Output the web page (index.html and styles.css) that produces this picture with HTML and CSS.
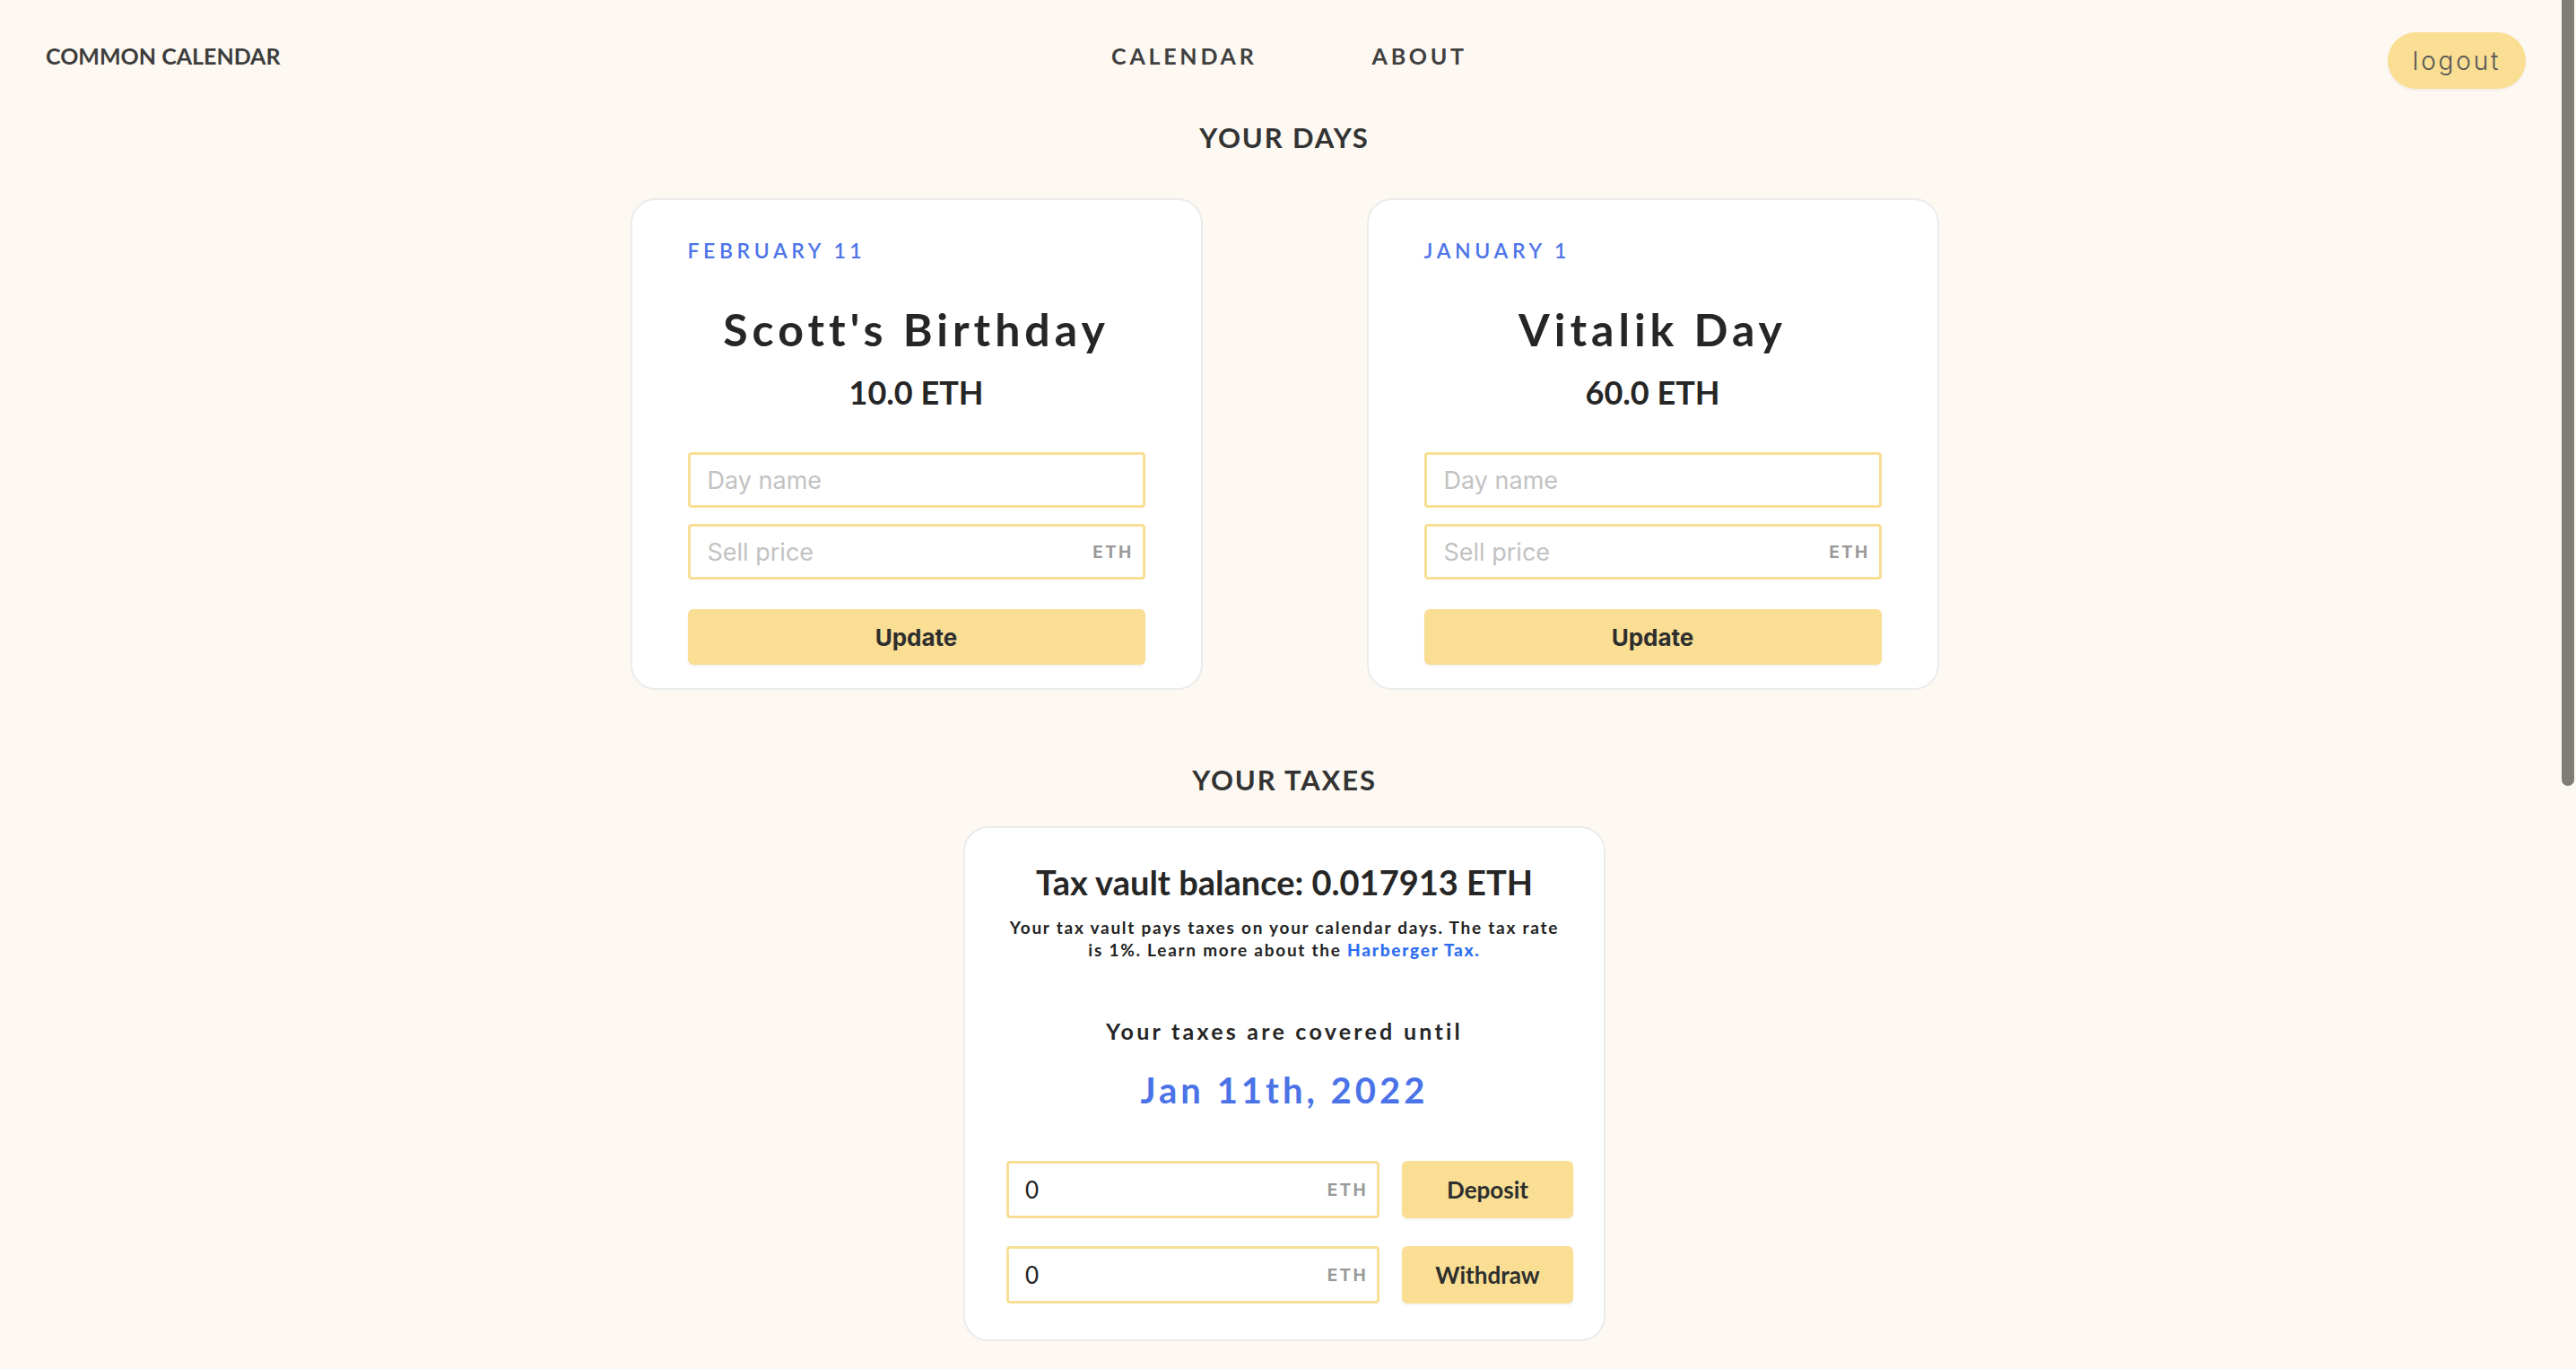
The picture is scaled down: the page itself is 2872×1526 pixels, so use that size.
FILE: index.html
```html
<!DOCTYPE html>
<html lang="en">
<head>
<meta charset="utf-8">
<title>Common Calendar</title>
<link rel="stylesheet" href="styles.css">
</head>
<body>
<header class="topbar">
  <div class="brand">COMMON CALENDAR</div>
  <nav class="nav">
    <a class="nav-link" href="#">CALENDAR</a>
    <a class="nav-link" href="#">ABOUT</a>
  </nav>
  <button class="logout">logout</button>
</header>
<main class="main">
  <h2 class="section-title">YOUR DAYS</h2>
  <div class="days">
    <div class="card day-card">
      <div class="day-date">FEBRUARY 11</div>
      <div class="day-name">Scott's Birthday</div>
      <div class="day-price">10.0 ETH</div>
      <div class="field first-field"><input class="input" placeholder="Day name"></div>
      <div class="field"><input class="input" placeholder="Sell price"><span class="suffix">ETH</span></div>
      <button class="update">Update</button>
    </div>
    <div class="card day-card">
      <div class="day-date">JANUARY 1</div>
      <div class="day-name">Vitalik Day</div>
      <div class="day-price">60.0 ETH</div>
      <div class="field first-field"><input class="input" placeholder="Day name"></div>
      <div class="field"><input class="input" placeholder="Sell price"><span class="suffix">ETH</span></div>
      <button class="update">Update</button>
    </div>
  </div>
  <h2 class="section-title taxes-title">YOUR TAXES</h2>
  <div class="card tax-card">
    <div class="balance">Tax vault balance: 0.017913 ETH</div>
    <p class="tax-desc">Your tax vault pays taxes on your calendar days. The tax rate is 1%. Learn more about the <a class="tax-link" href="#">Harberger Tax.</a></p>
    <div class="covered">Your taxes are covered until</div>
    <div class="covered-date">Jan 11th, 2022</div>
    <div class="vault-row first-row">
      <div class="field vault-field"><input class="input value-input" value="0"><span class="suffix">ETH</span></div>
      <button class="vault-btn">Deposit</button>
    </div>
    <div class="vault-row">
      <div class="field vault-field"><input class="input value-input" value="0"><span class="suffix">ETH</span></div>
      <button class="vault-btn">Withdraw</button>
    </div>
  </div>
</main>
<div class="scroll-thumb"></div>
</body>
</html>
```
FILE: styles.css
```css
html, body {
  margin: 0;
  padding: 0;
}
body {
  background: #fdf9f2;
  height: 1526px;
  overflow: hidden;
  font-family: "Lato", "Open Sans", sans-serif;
  color: #2a2a2a;
}
.topbar {
  height: 124px;
  display: flex;
  align-items: center;
  justify-content: space-between;
  padding: 0 56px 0 51px;
}
.brand {
  font-size: 25px;
  font-weight: 700;
  color: #3d3d3d;
  width: 400px;
}
.nav {
  display: flex;
  gap: 128px;
  margin-left: 8px;
}
.nav-link {
  font-size: 25px;
  font-weight: 700;
  letter-spacing: 0.15em;
  color: #404040;
  text-decoration: none;
}
.logout {
  width: 154px;
  height: 63px;
  margin: 11px 0 0 246px;
  border: none;
  border-radius: 32px;
  background: #f9de93;
  box-shadow: 0 2px 3px rgba(0,0,0,0.05);
  font-family: "Inter", "Roboto", sans-serif;
  font-weight: 300;
  font-size: 28px;
  letter-spacing: 0.1em;
  color: #555;
  padding: 0;
}
.main {
  display: flex;
  flex-direction: column;
  align-items: center;
  padding-right: 8px;
}
.section-title {
  margin: 9px 0 0;
  font-size: 31px;
  line-height: 40px;
  font-weight: 700;
  letter-spacing: 0.06em;
  color: #333;
}
.taxes-title {
  margin-top: 80px;
}
.days {
  display: flex;
  gap: 183px;
  margin-top: 48px;
}
.card {
  background: #fff;
  border: 2px solid #ebebeb;
  border-radius: 28px;
  box-sizing: border-box;
}
.day-card {
  width: 638px;
  height: 548px;
  padding: 41px 62px 24px;
  display: flex;
  flex-direction: column;
}
.day-date {
  font-size: 23px;
  line-height: 30px;
  font-weight: 600;
  letter-spacing: 0.2em;
  color: #4d74e8;
}
.day-name {
  margin-top: 41px;
  text-align: center;
  font-size: 50px;
  line-height: 64px;
  font-weight: 700;
  letter-spacing: 0.1em;
  color: #262626;
}
.day-price {
  margin-top: 14px;
  text-align: center;
  font-size: 36px;
  line-height: 48px;
  font-weight: 700;
  color: #262626;
}
.field {
  display: flex;
  align-items: center;
  height: 62px;
  border: 3px solid #f8df95;
  border-radius: 4px;
  box-sizing: border-box;
  background: #fff;
}
.day-card .field {
  margin-top: 18px;
}
.day-card .first-field {
  margin-top: 43px;
}
.input {
  flex: 1;
  min-width: 0;
  height: 100%;
  border: none;
  outline: none;
  background: transparent;
  padding: 0 0 0 19px;
  font-family: "Inter", "Roboto", sans-serif;
  font-size: 27px;
  color: #222;
}
.input::placeholder {
  color: #c2c2c2;
}
.suffix {
  flex: none;
  padding: 0 10px 0 8px;
  font-family: "Inter", "Roboto", sans-serif;
  font-size: 19px;
  font-weight: 700;
  letter-spacing: 0.12em;
  color: #999;
}
.update {
  margin-top: 33px;
  height: 62px;
  border: none;
  border-radius: 6px;
  background: #f9de93;
  box-shadow: 0 2px 3px rgba(0,0,0,0.05);
  font-family: "Inter", "Roboto", sans-serif;
  font-size: 26px;
  font-weight: 700;
  color: #2e2e2e;
}
.tax-card {
  margin-top: 32px;
  width: 716px;
  height: 574px;
  padding: 36px 34px 39px 46px;
  display: flex;
  flex-direction: column;
  align-items: center;
}
.balance {
  font-size: 38px;
  line-height: 48px;
  font-weight: 700;
  color: #262626;
  margin-left: -12px;
}
.tax-desc {
  margin: 14px 0 0 -12px;
  width: 622px;
  text-align: center;
  font-size: 19px;
  line-height: 25px;
  font-weight: 700;
  letter-spacing: 0.092em;
  color: #222;
}
.tax-link {
  color: #2c6df1;
  text-decoration: none;
  font-weight: 900;
}
.covered {
  margin: 63px 0 0 -12px;
  font-size: 25px;
  line-height: 30px;
  font-weight: 700;
  letter-spacing: 0.13em;
  color: #262626;
}
.covered-date {
  margin: 27px 0 0 -12px;
  font-size: 40px;
  line-height: 48px;
  font-weight: 700;
  letter-spacing: 0.1em;
  color: #4b73e8;
}
.vault-row {
  display: flex;
  gap: 25px;
  width: 632px;
  margin-top: 31px;
}
.vault-row.first-row {
  margin-top: 55px;
}
.vault-field {
  width: 416px;
  height: 64px;
}
.value-input {
  font-family: "Lato", "Open Sans", sans-serif;
  font-size: 26px;
  padding-left: 18px;
}
.vault-btn {
  width: 191px;
  height: 64px;
  border: none;
  border-radius: 6px;
  background: #f9de93;
  box-shadow: 0 2px 3px rgba(0,0,0,0.05);
  font-family: "Lato", "Open Sans", sans-serif;
  font-size: 26px;
  font-weight: 700;
  color: #2e2e2e;
}
.scroll-thumb {
  position: fixed;
  top: 0;
  right: 2px;
  width: 14px;
  height: 876px;
  background: #7e7d78;
  border-radius: 0 0 7px 7px;
}
```
